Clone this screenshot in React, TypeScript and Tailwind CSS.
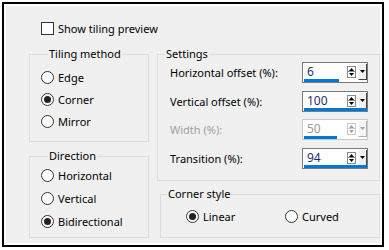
import type { ReactNode } from 'react';

const font = { fontFamily: '"Noto Sans", "Open Sans", sans-serif' };

const Radio = ({ checked, label }: { checked?: boolean; label: string }) => (
  <div className="flex h-[13px] items-center">
    <span className="flex h-[13px] w-[13px] shrink-0 items-center justify-center rounded-full border border-[#333333] bg-white">
      {checked && <span className="h-[7px] w-[7px] rounded-full bg-[#222222]" />}
    </span>
    <span className="ml-[4px] whitespace-nowrap text-[11px] leading-[13px] text-black">{label}</span>
  </div>
);

const Group = ({
  title,
  className,
  legendClass,
  children,
}: {
  title: string;
  className: string;
  legendClass: string;
  children: ReactNode;
}) => (
  <fieldset className={`border border-[#dcdcdc] ${className}`}>
    <legend className={`px-[1px] text-[11px] leading-[16px] text-black ${legendClass}`}>{title}</legend>
    {children}
  </fieldset>
);

const Arrow = ({ up, disabled }: { up?: boolean; disabled?: boolean }) => (
  <svg width="5" height="3" viewBox="0 0 5 3" className="block">
    <path d={up ? 'M0 3 L2.5 0 L5 3 Z' : 'M0 0 L2.5 3 L5 0 Z'} fill={disabled ? '#a0a0a0' : '#000000'} />
  </svg>
);

const SpinBox = ({ value, bar, disabled }: { value: string; bar: number; disabled?: boolean }) => (
  <div
    className={`flex h-[21px] w-[66px] shrink-0 flex-col border bg-white ${
      disabled ? 'border-[#c8c8c8]' : 'border-[#7a7a7a]'
    }`}
  >
    <div className="flex h-[16px]">
      <span
        className={`ml-[4px] mt-[2px] flex-1 text-[12px] leading-[14px] ${
          disabled ? 'text-[#9a9a9a]' : 'text-[#1d2f6b]'
        }`}
      >
        {value}
      </span>
      <div className="mt-[3px] flex flex-col">
        <span
          className={`flex h-[6px] w-[9px] items-center justify-center border ${
            disabled ? 'border-[#c8c8c8]' : 'border-[#8a8a8a]'
          }`}
        >
          <Arrow up disabled={disabled} />
        </span>
        <span
          className={`flex h-[6px] w-[9px] items-center justify-center border border-t-0 ${
            disabled ? 'border-[#c8c8c8]' : 'border-[#8a8a8a]'
          }`}
        >
          <Arrow disabled={disabled} />
        </span>
      </div>
      <span
        className={`ml-[2px] mt-[1px] flex h-[16px] w-[9px] items-center justify-center border-b border-l border-r border-l-white ${
          disabled ? 'border-b-[#b0b0b0] border-r-[#b0b0b0] bg-[#f4f4f4]' : 'border-b-[#404040] border-r-[#404040] bg-[#f0f0f0]'
        }`}
      >
        <Arrow disabled={disabled} />
      </span>
    </div>
    <div className="ml-[1px] h-[3px] bg-[#0078d7]" style={{ width: bar }} />
  </div>
);

const SettingRow = ({
  label,
  value,
  bar,
  disabled,
  className = '',
}: {
  label: string;
  value: string;
  bar: number;
  disabled?: boolean;
  className?: string;
}) => (
  <div className={`flex h-[21px] items-center ${className}`}>
    <span
      className={`w-[144px] shrink-0 whitespace-nowrap pl-[12px] text-[11px] leading-[16px] ${
        disabled ? 'text-[#a0a0a0]' : 'text-black'
      }`}
    >
      {label}
    </span>
    <SpinBox value={value} bar={bar} disabled={disabled} />
  </div>
);

export default function App() {
  return (
    <div className="h-[250px] w-[389px] bg-white pb-[3px] pl-[2px] pr-[5px] pt-[2px]" style={font}>
      <div className="h-full border-2 border-black bg-white p-[2px]">
        <div className="h-full bg-[#f0f0f0] pl-[23px] pt-[16px]">
          <label className="ml-[12px] flex h-[13px] items-center">
            <span className="h-[13px] w-[13px] border border-[#333333] bg-white" />
            <span className="ml-[4px] text-[11px] leading-[13px] text-black">Show tiling preview</span>
          </label>

          <div className="mt-[11px] flex gap-[8px]">
            <div className="flex w-[121px] flex-col gap-[6px]">
              <Group title="Tiling method" className="h-[96px] pl-[11px]" legendClass="ml-[7px]">
                <div className="flex flex-col gap-[9px] pt-[9px]">
                  <Radio label="Edge" />
                  <Radio label="Corner" checked />
                  <Radio label="Mirror" />
                </div>
              </Group>
              <Group title="Direction" className="h-[90px] pl-[11px]" legendClass="ml-[7px]">
                <div className="flex flex-col gap-[10px] pt-[5px]">
                  <Radio label="Horizontal" />
                  <Radio label="Vertical" />
                  <Radio label="Bidirectional" checked />
                </div>
              </Group>
            </div>

            <div className="flex w-[224px] flex-col gap-[5px]">
              <Group title="Settings" className="h-[135px]" legendClass="ml-[7px]">
                <SettingRow label="Horizontal offset (%):" value="6" bar={35} />
                <SettingRow label="Vertical offset (%):" value="100" bar={63} className="mt-[8px]" />
                <SettingRow label="Width (%):" value="50" bar={33} disabled className="mt-[7px]" />
                <SettingRow label="Transition (%):" value="94" bar={63} className="mt-[8px]" />
              </Group>
              <Group title="Corner style" className="ml-[3px] h-[52px] w-[220px]" legendClass="ml-[6px]">
                <div className="flex pl-[25px] pt-[8px]">
                  <div className="w-[99px]">
                    <Radio label="Linear" checked />
                  </div>
                  <Radio label="Curved" />
                </div>
              </Group>
            </div>
          </div>
        </div>
      </div>
    </div>
  );
}
